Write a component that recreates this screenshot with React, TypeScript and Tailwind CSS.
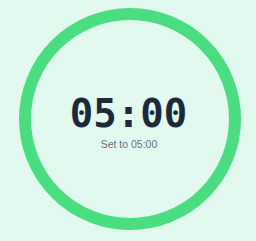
export default function App() {
  return (
    <div className="w-[256px] h-[241px] bg-[#e2f9f0] pl-[19px] pt-[8px] overflow-hidden">
      <div className="w-[222px] h-[222px] rounded-full border-[12px] border-[#4ade80] flex flex-col items-center justify-center">
        <div className="font-['DejaVu_Sans_Mono',monospace] text-[39px] leading-none font-bold text-[#1e293b] -ml-[3px] mt-[6px]">
          05:00
        </div>
        <div className="font-['Liberation_Sans',Arial,sans-serif] text-[10.5px] leading-none text-[#6b7280] mt-[6px] -ml-[2px]">
          Set to 05:00
        </div>
      </div>
    </div>
  );
}
